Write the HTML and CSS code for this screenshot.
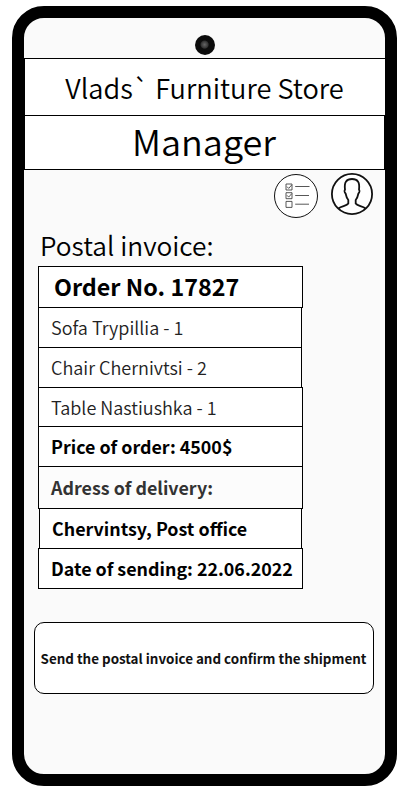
FILE: index.html
```html
<!DOCTYPE html>
<html lang="en">
<head>
<meta charset="utf-8">
<title>Vlads` Furniture Store</title>
<link rel="stylesheet" href="styles.css">
</head>
<body>
<main class="phone">
  <div class="status"><span class="camera"></span></div>
  <header class="store"><span>Vlads` Furniture Store</span></header>
  <div class="role"><span>Manager</span></div>
  <nav class="actions">
    <svg class="orders" viewBox="0 0 44 44" width="44" height="44" fill="none" stroke="#111">
      <circle cx="22" cy="22" r="21.5" fill="#fff"/>
      <g stroke="#444" stroke-width=".9">
        <path d="M12 10h6v6h-6zM12 18.7h6v6h-6zM12 27.4h6v6h-6z"/>
        <path d="M13 12.6l1.7 1.8 3-3.4M13 21.3l1.7 1.8 3-3.4M21.200 12.5H35.500M21.200 21.500H35M21.200 30.200H35"/>
      </g>
    </svg>
    <svg class="profile" viewBox="0 0 42 42" width="42" height="42" fill="none" stroke="#111" stroke-width="1.8">
      <circle cx="21" cy="21" r="20.100" fill="#fff"/>
      <path d="M7.500 35.500C10.500 33 16 33 17.300 30.500V27C15.500 25 15 22.500 14.600 20.500C13.300 19.500 13.300 17.500 14 16.500C13 9 15.500 6 21 6S29 9 28 16.500C28.700 17.500 28.700 19.500 27.400 20.500C27 22.500 26.500 25 24.700 27V30.500C26 33 31.500 33 34.500 35.500"/>
    </svg>
  </nav>
  <h1 class="title"><span>Postal invoice:</span></h1>
  <section class="invoice">
    <div class="row order"><span>Order No. 17827</span></div>
    <div class="row item narrow"><span>Sofa Trypillia - 1</span></div>
    <div class="row item narrow"><span>Chair Chernivtsi - 2</span></div>
    <div class="row item short"><span>Table Nastiushka - 1</span></div>
    <div class="row"><span>Price of order: 4500$</span></div>
    <div class="row address"><span>Adress of delivery:</span></div>
    <div class="row inset"><span>Chervintsy, Post office</span></div>
    <div class="row last"><span>Date of sending: 22.06.2022</span></div>
  </section>
  <button class="send"><span>Send the postal invoice and confirm the shipment</span></button>
</main>
</body>
</html>
```
FILE: styles.css
```css
* { box-sizing: border-box; }
body {
  margin: 0;
  padding: 6px 0 0 12px;
  background: #fff;
  color: #000;
  font-family: "Noto Sans CJK SC", sans-serif;
}
.phone {
  width: 385px;
  height: 780px;
  border: 12px solid #000;
  border-radius: 32px;
  background: #fafafa;
  display: flex;
  flex-direction: column;
}
.status { height: 40px; padding: 17px 0 0 171px; }
.camera {
  display: block;
  width: 20px;
  height: 20px;
  border-radius: 50%;
  background: radial-gradient(circle at 48% 48%, #666 0, #333 3.500px, #0c0c0c 4.500px);
}
.store, .role {
  border: 1px solid #000;
  background: #fff;
  display: flex;
  justify-content: center;
  align-items: center;
  white-space: nowrap;
  font-weight: 350;
}
.store { height: 58px; margin-right: -1px; padding: 0 1px 1px 0; font-size: 27.200px; }
.role { height: 55px; margin-top: -1px; padding: 0 1px 5px 0; font-size: 36px; }
.actions { height: 58px; display: flex; gap: 13px; padding: 4px 0 0 250px; }
.profile { margin-top: -1px; }
.title {
  margin: 0;
  padding-left: 16px;
  height: 38px;
  line-height: 34px;
  font-size: 26.300px;
  font-weight: 350;
  white-space: nowrap;
}
.invoice { width: 265px; margin-left: 14px; }
.row {
  height: 41px;
  margin-bottom: -1px;
  border: 1px solid #000;
  background: #fff;
  padding: 0 0 2px 12px;
  display: flex;
  align-items: center;
  white-space: nowrap;
  font-size: 17.870px;
  font-weight: 700;
}
.order { height: 42px; padding-left: 15px; font-size: 23.300px; }
.item { font-size: 18.050px; font-weight: 350; color: #222; }
.narrow { margin-right: 1px; }
.short { height: 40px; padding-bottom: 0; }
.address { height: 43px; background: #fcfcfc; color: #333; }
.inset { margin-left: 1px; margin-right: 1px; }
.last { margin-bottom: 0; }
.send {
  width: 340px;
  height: 72px;
  margin: 33px 0 0 10px;
  padding: 0 1px 1px 0;
  border: 1px solid #000;
  border-radius: 10px;
  background: #fff;
  color: #111;
  font: 700 13.400px "Noto Sans CJK SC", sans-serif;
  white-space: nowrap;
}
```
